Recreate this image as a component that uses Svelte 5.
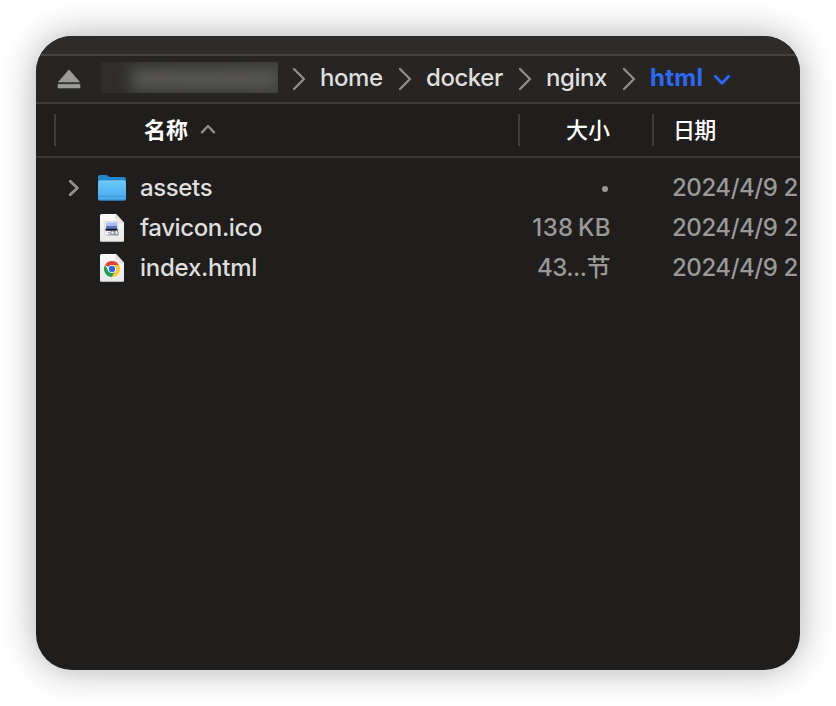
<script>
  const crumbs = [
    { name: 'home', width: 62 },
    { name: 'docker', width: 77 },
    { name: 'nginx', width: 61 },
    { name: 'html', width: 54, current: true }
  ];
  const files = [
    { name: 'assets', kind: 'folder', size: '•', date: '2024/4/9 2' },
    { name: 'favicon.ico', kind: 'image', size: '138 KB', date: '2024/4/9 2' },
    { name: 'index.html', kind: 'chrome', size: '43...节', date: '2024/4/9 2' }
  ];
</script>

<main>
  <section class="window">
    <div class="toolbar"></div>
    <nav>
      <svg class="eject" width="24" height="20" viewBox="0 0 24 20"><path d="M12 .8 22.6 13H1.4ZM1 15.3h22V19H1Z" fill="#9c9b99" stroke="#9c9b99" stroke-width=".6" stroke-linejoin="round" /></svg>
      <div class="host"><div class="smudge"></div></div>
      {#each crumbs as crumb}
        <svg class="sep" width="14" height="24" viewBox="0 0 14 24"><path d="m2 2 10 10L2 22" fill="none" stroke="#8f8e8c" stroke-width="2.3" stroke-linecap="round" stroke-linejoin="round" /></svg>
        <span class="crumb {crumb.name}" class:current={crumb.current} style:width="{crumb.width}px">{crumb.name}</span>
      {/each}
      <svg class="down" width="18" height="14" viewBox="0 0 18 14"><path d="m2.3 3.3 6.7 7 6.7-7" fill="none" stroke="#2c68fb" stroke-width="2.8" stroke-linecap="round" stroke-linejoin="round" /></svg>
    </nav>
    <header>
      <div class="h-name">
        <b>名称</b>
        <svg width="16" height="12" viewBox="0 0 16 12"><path d="m2 9.3 6-6.3 6 6.3" fill="none" stroke="#8f8e8c" stroke-width="2.4" stroke-linecap="round" stroke-linejoin="round" /></svg>
      </div>
      <div class="h-size">大小</div>
      <div class="h-date">日期</div>
    </header>
    <div class="list">
      {#each files as file}
        <div class="row">
          <div class="disclosure">
            {#if file.kind === 'folder'}
              <svg width="12" height="18" viewBox="0 0 12 18"><path d="m2.2 2.2 7.2 6.8-7.2 6.8" fill="none" stroke="#91908e" stroke-width="2.9" stroke-linecap="round" stroke-linejoin="round" /></svg>
            {/if}
          </div>
          <svg class="icon" width="30" height="30" viewBox="0 0 30 30">
            <defs>
              <linearGradient id="front" x1="0" y1="0" x2="0" y2="1"><stop offset="0" stop-color="#6bc8fb" /><stop offset="1" stop-color="#47a7e8" /></linearGradient>
              <linearGradient id="paper" x1="0" y1="0" x2="0" y2="1"><stop offset="0" stop-color="#fafafa" /><stop offset="1" stop-color="#e9e9e9" /></linearGradient>
              <linearGradient id="fold" x1="0" y1="1" x2="1" y2="0"><stop offset="0" stop-color="#fff" /><stop offset=".5" stop-color="#dcdcdc" /><stop offset="1" stop-color="#9a9a9a" /></linearGradient>
            </defs>
            {#if file.kind === 'folder'}
              <path d="M1 4Q1 2 3 2h6c2 0 2.5 2 4.5 2H27q2 0 2 2v6H1Z" fill="#2586c8" />
              <path d="M1 10q0-2.2 2-2.2h24q2 0 2 2.2v15.500q0 2-2 2H3q-2 0-2-2Z" fill="url(#front)" />
              <path d="M2 8h26" stroke="#8bd7ff" stroke-width=".8" />
              <path d="M1.5 23.2h27" stroke="#3191d2" stroke-width=".8" />
              <path d="M2.2 27.1h25.6" stroke="#2a83bf" stroke-width=".8" />
            {:else}
              <path d="M4.5 1H19l8 8.5v18q0 1.300-1.300 1.300H4.500Q3 28.800 3 27.500v-25Q3 1 4.500 1Z" fill="url(#paper)" />
              <path d="M19 1v6.5q0 2.200 2.200 2.200H27Z" fill="url(#fold)" />
              <path d="M19 1v6.5q0 2.200 2.200 2.200H27" fill="none" stroke="#c2c2c2" stroke-width=".5" />
              {#if file.kind === 'image'}
                <rect x="7.5" y="8.5" width="13.5" height="14" rx="1.2" fill="#f4f4f6" stroke="#c7c7ca" stroke-width=".6" />
                <path d="M9 9.5h11v4H9Z" fill="#a9baf0" />
                <path d="M9 13h11v3.2H9Z" fill="#5a74b8" />
                <path d="M8.5 15.800h12v2H8.500Z" fill="#0b1025" />
                <circle cx="15.5" cy="19.700" r="1.900" fill="#edf0f4" stroke="#49515e" stroke-width=".7" />
                <path d="m17.800 18.200 1.800-1 1.400 1.800v3h-3.200Z" fill="#e4e7ec" stroke="#59616d" stroke-width=".7" />
                <path d="M10.500 21.700h9M11 19.400h2.500" stroke="#8a9199" stroke-width=".9" />
              {:else}
                <circle cx="15" cy="16" r="8" fill="#fff" />
                <path d="M15 16 8.07 12A8 8 0 0 1 21.93 12H15Z" fill="#df4436" />
                <path d="M8.07 12A8 8 0 0 0 15 24l3.46-6L15 16l-3.46 2Z" fill="#279b50" />
                <path d="M15 24A8 8 0 0 0 21.93 12H15l3.46 6Z" fill="#fbc72d" />
                <circle cx="15" cy="16" r="4" fill="#fff" />
                <circle cx="15" cy="16" r="3.2" fill="#3269e2" />
              {/if}
            {/if}
          </svg>
          <span class="name {file.kind}">{file.name}</span>
          <span class="size {file.kind}">{#if file.kind === 'folder'}<i></i>{:else}{file.size}{/if}</span>
          <span class="date">{file.date}</span>
        </div>
      {/each}
    </div>
  </section>
</main>

<style>
  :global(body) { margin: 0; background: #fff; }
  main { box-sizing: border-box; width: 836px; height: 706px; padding: 36px; overflow: hidden; font: 500 24px/40px Inter, "Noto Sans CJK SC", sans-serif; }
  .window { width: 764px; height: 634px; border-radius: 36px; overflow: hidden; background: #1f1e1c; box-shadow: 0 0 36px rgba(0, 0, 0, .32); }
  .toolbar { height: 18px; background: #2d2c2a; border-bottom: 2px solid #434240; }
  nav { display: flex; align-items: center; height: 46px; background: #262523; border-bottom: 2px solid #3e3d3b; }
  nav svg, nav span, .host { flex: none; }
  .eject { margin-left: 21px; }
  .host { display: flex; align-items: center; justify-content: flex-end; width: 177px; height: 31px; margin: -3px 14px 0 20px; overflow: hidden; background: linear-gradient(90deg, #2e2d2b 6%, #353432 22%, #3c3b39); }
  .smudge { width: 146px; height: 20px; margin-top: 3px; background: #585755; filter: blur(7px); }
  .sep { margin-right: 14px; }
  .crumb { margin-right: 15px; height: 40px; line-height: 38px; color: #dfdedc; white-space: nowrap; letter-spacing: -.45px; }
  .crumb.home { margin-right: 16px; }
  .crumb.current { color: #2c68fb; font-weight: 700; margin: 0 9px 0 0; letter-spacing: .3px; }
  .down { margin-top: 2px; }
  header { display: flex; align-items: center; height: 52px; border-bottom: 2px solid #3a3937; font-size: 22px; color: #fff; }
  header > div { box-sizing: border-box; height: 32px; line-height: 32px; border-left: 2px solid #3e3d3b; }
  .h-name { display: flex; align-items: center; width: 464px; margin-left: 18px; padding-left: 88px; }
  .h-name svg { margin: -3px 0 0 12px; }
  .h-size { width: 134px; padding-left: 46px; }
  .h-date { padding-left: 19px; letter-spacing: -.8px; }
  .list { padding-top: 10px; }
  .row { display: flex; align-items: center; height: 40px; white-space: nowrap; }
  .disclosure { display: flex; width: 29px; padding-left: 32px; }
  .row > * { flex: none; }
  .icon { margin-right: 13px; }
  .name { width: 330px; color: #dfdedc; letter-spacing: -.38px; }
  .name.chrome { letter-spacing: -.25px; }
  .size { width: 141px; text-align: right; color: #9a9997; }
  .size.image { letter-spacing: .4px; word-spacing: -2.5px; }
  .size.chrome { box-sizing: border-box; padding-right: 1px; letter-spacing: -.5px; }
  .size i { display: inline-block; width: 6px; height: 6px; margin: 0 3px 4px 0; border-radius: 50%; background: #9a9997; }
  .date { margin-left: 61px; color: #9a9997; letter-spacing: -.45px; }
</style>
